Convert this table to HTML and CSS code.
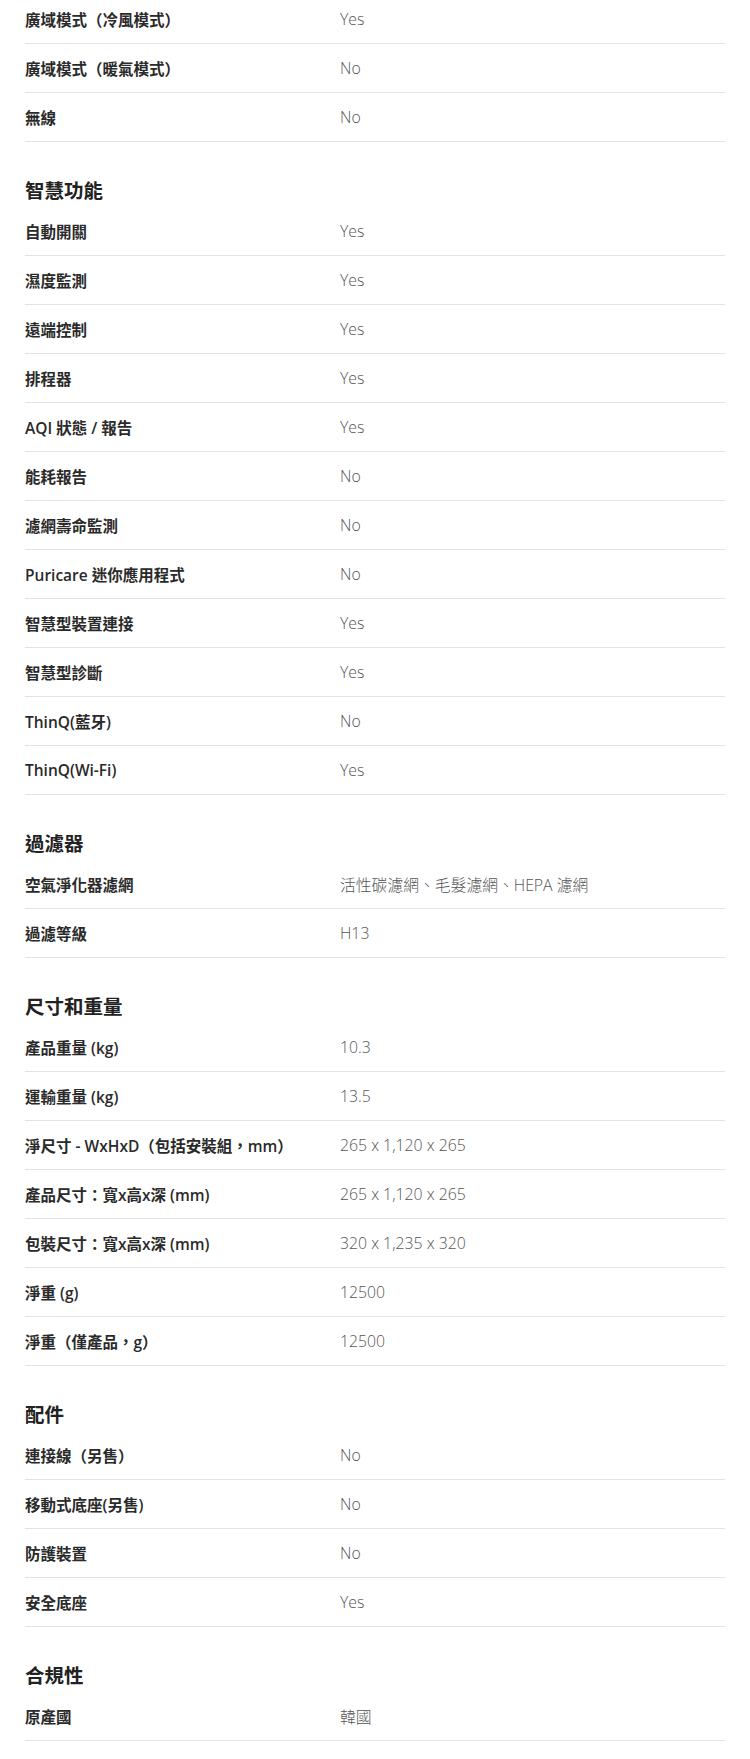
FILE: index.html
```html
<!DOCTYPE html>
<html lang="zh-Hant">
<head>
<meta charset="utf-8">
<link rel="stylesheet" href="styles.css">
</head>
<body>
<div class="specs">
  <section class="group first">
    <div class="row"><span class="label">廣域模式（冷風模式）</span><span class="value">Yes</span></div>
    <div class="row"><span class="label">廣域模式（暖氣模式）</span><span class="value">No</span></div>
    <div class="row"><span class="label">無線</span><span class="value">No</span></div>
  </section>
  <section class="group">
    <h2 class="heading">智慧功能</h2>
    <div class="row"><span class="label">自動開關</span><span class="value">Yes</span></div>
    <div class="row"><span class="label">濕度監測</span><span class="value">Yes</span></div>
    <div class="row"><span class="label">遠端控制</span><span class="value">Yes</span></div>
    <div class="row"><span class="label">排程器</span><span class="value">Yes</span></div>
    <div class="row"><span class="label">AQI 狀態 / 報告</span><span class="value">Yes</span></div>
    <div class="row"><span class="label">能耗報告</span><span class="value">No</span></div>
    <div class="row"><span class="label">濾網壽命監測</span><span class="value">No</span></div>
    <div class="row"><span class="label">Puricare 迷你應用程式</span><span class="value">No</span></div>
    <div class="row"><span class="label">智慧型裝置連接</span><span class="value">Yes</span></div>
    <div class="row"><span class="label">智慧型診斷</span><span class="value">Yes</span></div>
    <div class="row"><span class="label">ThinQ(藍牙)</span><span class="value">No</span></div>
    <div class="row"><span class="label">ThinQ(Wi-Fi)</span><span class="value">Yes</span></div>
  </section>
  <section class="group">
    <h2 class="heading">過濾器</h2>
    <div class="row"><span class="label">空氣淨化器濾網</span><span class="value">活性碳濾網、毛髮濾網、HEPA 濾網</span></div>
    <div class="row"><span class="label">過濾等級</span><span class="value">H13</span></div>
  </section>
  <section class="group">
    <h2 class="heading">尺寸和重量</h2>
    <div class="row"><span class="label">產品重量 (kg)</span><span class="value">10.3</span></div>
    <div class="row"><span class="label">運輸重量 (kg)</span><span class="value">13.5</span></div>
    <div class="row"><span class="label">淨尺寸 - WxHxD（包括安裝組，mm）</span><span class="value">265 x 1,120 x 265</span></div>
    <div class="row"><span class="label">產品尺寸：寬x高x深 (mm)</span><span class="value">265 x 1,120 x 265</span></div>
    <div class="row"><span class="label">包裝尺寸：寬x高x深 (mm)</span><span class="value">320 x 1,235 x 320</span></div>
    <div class="row"><span class="label">淨重 (g)</span><span class="value">12500</span></div>
    <div class="row"><span class="label">淨重（僅產品，g）</span><span class="value">12500</span></div>
  </section>
  <section class="group">
    <h2 class="heading">配件</h2>
    <div class="row"><span class="label">連接線（另售）</span><span class="value">No</span></div>
    <div class="row"><span class="label">移動式底座(另售)</span><span class="value">No</span></div>
    <div class="row"><span class="label">防護裝置</span><span class="value">No</span></div>
    <div class="row"><span class="label">安全底座</span><span class="value">Yes</span></div>
  </section>
  <section class="group">
    <h2 class="heading">合規性</h2>
    <div class="row"><span class="label">原產國</span><span class="value">韓國</span></div>
  </section>
</div>
</body>
</html>
```

FILE: styles.css
```css
html, body {
  margin: 0;
  padding: 0;
  background: #ffffff;
}

body {
  font-family: "Open Sans", "Noto Sans CJK TC", sans-serif;
  color: #333333;
}

.specs {
  margin: -5px 25px 0 25px;
  width: 700px;
  padding-bottom: 18px;
}

.group {
  display: flex;
  flex-direction: column;
}

.heading {
  margin: 0;
  padding-top: 36px;
  height: 29px;
  line-height: 24px;
  font-size: 19.5px;
  font-weight: 700;
  color: #222222;
  font-family: "Noto Sans CJK TC", sans-serif;
}

.row {
  display: grid;
  grid-template-columns: 315px 1fr;
  align-items: center;
  height: 48px;
  border-bottom: 1px solid #e3e3e3;
}

.label {
  font-size: 15.5px;
  font-weight: 600;
  color: #2a2a2a;
  white-space: nowrap;
  font-family: "Open Sans", "Noto Sans CJK TC", sans-serif;
}

.value {
  font-size: 15.8px;
  font-weight: 300;
  color: #555555;
  white-space: nowrap;
  font-family: "Open Sans", "Noto Sans CJK TC", sans-serif;
}
```
